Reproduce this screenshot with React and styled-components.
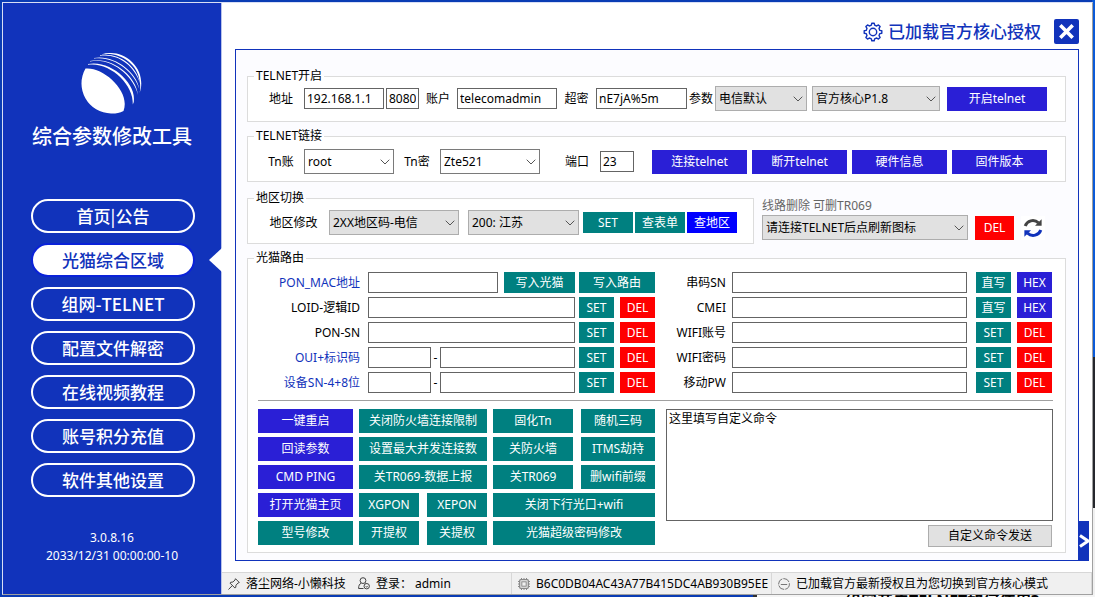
import { useState } from "react";
import styled, { createGlobalStyle, css } from "styled-components";

const COLORS = {
  brand: "#1133bb",
  teal: "#008080",
  violet: "#2a1fd6",
  blue: "#0000ff",
  red: "#ff0000",
};

const navItems = [
  "首页|公告",
  "光猫综合区域",
  "组网-TELNET",
  "配置文件解密",
  "在线视频教程",
  "账号积分充值",
  "软件其他设置",
];

const leftFields = [
  { id: "loid", label: "LOID-逻辑ID" },
  { id: "ponsn", label: "PON-SN" },
  { id: "oui", label: "OUI+标识码", split: true, link: true },
  { id: "devsn", label: "设备SN-4+8位", split: true, link: true },
];

const rightFields = [
  { id: "sn", label: "串码SN", hex: true },
  { id: "cmei", label: "CMEI", hex: true },
  { id: "wifiname", label: "WIFI账号" },
  { id: "wifipass", label: "WIFI密码" },
  { id: "mobilepw", label: "移动PW" },
];

const Logo = () => (
  <svg width="62" height="62" viewBox="0 0 62 62" fill="#fff" aria-hidden="true">
    <path d="M4.5 15.500C22 13.500 50 38 42.500 58C38.500 60 34 60.700 30 60.500A30 30 0 0 1 4.500 15.500Z" />
    <path d="M7 11.800C28 8.500 53 31 51.800 51.500L52.800 49C56 30 29 6.500 7 11Z" />
    <path d="M9 8.500C31 4 53 24 57 42C55.500 23 31 3 9 7.900Z" />
    <path d="M13 5.600C32 2.500 53 18 58.300 36C55.500 18 32 1.300 13 5Z" />
    <path d="M19 2.900C36 0 53 12 59 30C55 11 36 -1 19 2.300Z" />
    <path d="M21 1.600C36 -2 57 9 58.800 29C59.500 33 59.300 37 58.600 40C62 31 60.500 18 51 9C42 0 30 -1.500 21 1.200Z" />
  </svg>
);

const Chevron = () => (
  <svg width="10" height="6" viewBox="0 0 10 6" fill="none" stroke="#555" aria-hidden="true">
    <path d="M0.7 0.7L5 5L9.300 0.700" />
  </svg>
);

const GearIcon = () => (
  <svg width="20" height="20" viewBox="0 0 20 20" fill="none" stroke={COLORS.brand} strokeWidth="1.4" strokeLinejoin="round" aria-hidden="true">
    <path d="M8.400 3.200L8.800 1.200H11.200L11.600 3.200L13.700 4L15.400 2.900L17.100 4.600L16 6.300L16.800 8.400L18.800 8.800V11.200L16.800 11.600L16 13.700L17.100 15.400L15.400 17.100L13.700 16L11.600 16.800L11.200 18.800H8.800L8.400 16.800L6.300 16L4.600 17.100L2.900 15.400L4 13.700L3.200 11.600L1.200 11.200V8.800L3.200 8.400L4 6.300L2.900 4.600L4.600 2.900L6.300 4Z" />
    <circle cx="10" cy="10" r="3.700" />
  </svg>
);

const CrossIcon = () => (
  <svg width="15" height="15" viewBox="0 0 15 15" fill="none" stroke="#fff" strokeWidth="3.600" aria-hidden="true">
    <path d="M1.300 1.300L13.700 13.700M13.700 1.300L1.300 13.700" />
  </svg>
);

const RefreshIcon = () => (
  <svg width="20" height="20" viewBox="0 0 20 20" fill="none" strokeWidth="3" aria-hidden="true">
    <path d="M2.200 8C4 2.500 11 0.800 15.500 4.800" stroke="#444" />
    <path d="M18.600 1.200V7.800H12Z" fill="#444" />
    <path d="M17.800 12C16 17.500 9 19.200 4.500 15.200" stroke={COLORS.brand} />
    <path d="M1.400 18.800V12.200H8Z" fill={COLORS.brand} />
  </svg>
);

const PinIcon = () => (
  <svg width="12" height="12" viewBox="0 0 12 12" fill="none" stroke="#444" strokeLinejoin="round" aria-hidden="true">
    <path d="M7.500 0.700L11.300 4.500L10 5L8 7.200L7.700 9.500L6.900 10L2 5.100L2.600 4.300L4.900 4L7 2ZM4.300 7.600L0.500 11.500" />
  </svg>
);

const UserIcon = () => (
  <svg width="12" height="13" viewBox="0 0 12 13" fill="none" stroke="#444" aria-hidden="true">
    <circle cx="5" cy="3.600" r="2.900" />
    <path d="M3.200 6.200C1.400 7 0.600 8.600 0.600 11.500H5.500M7.500 6.200L8.500 6.600" />
    <circle cx="8.700" cy="9.200" r="2.700" />
    <path d="M7.700 9.300C8 10.300 9.400 10.300 9.700 9.300" />
  </svg>
);

const ChipIcon = () => (
  <svg width="12" height="12" viewBox="0 0 12 12" fill="none" stroke="#888" aria-hidden="true">
    <rect x="1.700" y="1.700" width="8.600" height="8.600" rx="1" strokeWidth="1.300" />
    <rect x="3.800" y="3.800" width="4.400" height="4.400" />
    <path d="M3.500 0V1.500M6 0V1.500M8.500 0V1.500M3.500 10.500V12M6 10.500V12M8.500 10.500V12M0 3.500H1.500M0 6H1.500M0 8.500H1.500M10.500 3.500H12M10.500 6H12M10.500 8.500H12" />
  </svg>
);

const MinusIcon = () => (
  <svg width="12" height="12" viewBox="0 0 12 12" fill="none" stroke="#777" aria-hidden="true">
    <circle cx="6" cy="6" r="5.400" strokeDasharray="7 1" />
    <path d="M2.800 6.500H9.200" />
  </svg>
);

const SelectBox = ({ id, label, options, width, editable }) => (
  <SelectWrap $width={width}>
    <StyledSelect id={id} aria-label={label} $editable={editable}>
      {options.map((option) => (
        <option key={option}>{option}</option>
      ))}
    </StyledSelect>
    <Chevron />
  </SelectWrap>
);

const Sidebar = ({ active, onSelect }) => (
  <SidebarBlock>
    <Logo />
    <AppTitle>综合参数修改工具</AppTitle>
    <Nav>
      {navItems.map((item, index) => (
        <NavItem key={item} $active={index === active}>
          <NavButton $active={index === active} onClick={() => onSelect(index)}>
            {item}
          </NavButton>
        </NavItem>
      ))}
    </Nav>
    <Version>
      3.0.8.16
      <br />
      2033/12/31 00:00:00-10
    </Version>
  </SidebarBlock>
);

const TelnetOpen = () => (
  <Group $top={2} $bottom={10}>
    <legend>TELNET开启</legend>
    <Row>
      <Label htmlFor="host" $width={46}>地址</Label>
      <TextInput id="host" $width={80} defaultValue="192.168.1.1" />
      <TextInput aria-label="地址端口" $width={33} $gap={2} defaultValue="8080" />
      <Label htmlFor="account" $width={38}>账户</Label>
      <TextInput id="account" $width={100} defaultValue="telecomadmin" />
      <Label htmlFor="superpass" $width={39}>超密</Label>
      <TextInput id="superpass" $width={91} defaultValue="nE7jA%5m" />
      <Label htmlFor="param" $width={28}>参数</Label>
      <SelectBox id="param" width={92} options={["电信默认"]} />
      <Actions $gap={7}>
        <SelectBox label="核心" width={128} options={["官方核心P1.8"]} />
        <Button $color="violet" $width={100}>开启telnet</Button>
      </Actions>
    </Row>
  </Group>
);

const TelnetConnect = () => (
  <Group $top={5} $bottom={7}>
    <legend>TELNET链接</legend>
    <Row>
      <Label htmlFor="tnuser" $width={46}>Tn账</Label>
      <SelectBox id="tnuser" width={90} editable options={["root"]} />
      <Label htmlFor="tnpass" $width={46}>Tn密</Label>
      <SelectBox id="tnpass" width={100} editable options={["Zte521"]} />
      <PortField>
        <Label htmlFor="port" $width={46}>端口</Label>
        <TextInput id="port" $width={34} defaultValue="23" />
      </PortField>
      <Actions $gap={5}>
        {["连接telnet", "断开telnet", "硬件信息", "固件版本"].map((text) => (
          <Button key={text} $color="violet" $width={95}>{text}</Button>
        ))}
      </Actions>
    </Row>
  </Group>
);

const RegionSwitch = () => (
  <RegionRow>
    <Group $top={4} $bottom={8}>
      <legend>地区切换</legend>
      <Row>
        <Label htmlFor="region" $width={71}>地区修改</Label>
        <SelectBox id="region" width={130} options={["2XX地区码-电信"]} />
        <Actions $gap={2}>
          <SelectBox label="省份" width={111} options={["200: 江苏"]} />
          <Button $color="teal" $width={50} $small $inset>SET</Button>
          <Button $color="teal" $width={50} $small>查表单</Button>
          <Button $color="blue" $width={50} $small>查地区</Button>
        </Actions>
      </Row>
    </Group>
    <LineDelete>
      <label htmlFor="line">线路删除 可删TR069</label>
      <div>
        <SelectBox id="line" options={["请连接TELNET后点刷新图标"]} />
        <Button $color="red" $width={39}>DEL</Button>
        <IconButton aria-label="刷新"><RefreshIcon /></IconButton>
      </div>
    </LineDelete>
  </RegionRow>
);

const RouterForm = () => (
  <>
    <FormColumn>
      <FormRow>
        <FormLabel htmlFor="mac" $width={102} $link>PON_MAC地址</FormLabel>
        <TextInput id="mac" />
        <Pair $gap={6}>
          <Button $color="teal" $width={71} $small>写入光猫</Button>
        </Pair>
        <Pair $gap={4}>
          <Button $color="teal" $width={76} $small>写入路由</Button>
        </Pair>
      </FormRow>
      {leftFields.map(({ id, label, split, link }) => (
        <FormRow key={id}>
          <FormLabel htmlFor={id} $width={102} $link={link}>{label}</FormLabel>
          {split && (
            <>
              <TextInput id={id} $width={63} />
              <Dash>-</Dash>
            </>
          )}
          <TextInput id={split ? undefined : id} aria-label={label} />
          <Pair $gap={4}>
            <Button $color="teal" $width={35} $small>SET</Button>
            <Button $color="red" $width={35} $small>DEL</Button>
          </Pair>
        </FormRow>
      ))}
    </FormColumn>
    <FormColumn $inset>
      {rightFields.map(({ id, label, hex }) => (
        <FormRow key={id}>
          <FormLabel htmlFor={id} $width={60}>{label}</FormLabel>
          <TextInput id={id} />
          <Pair $gap={9}>
            <Button $color="teal" $width={35} $small>{hex ? "直写" : "SET"}</Button>
            <Button $color={hex ? "violet" : "red"} $width={35} $small>{hex ? "HEX" : "DEL"}</Button>
          </Pair>
        </FormRow>
      ))}
    </FormColumn>
  </>
);

const RouterTools = () => (
  <>
    <ToolGroups>
      <ToolGrid>
        {["一键重启", "回读参数", "CMD PING", "打开光猫主页"].map((text) => (
          <Button key={text} $color="violet" $span>{text}</Button>
        ))}
        <Button $color="teal" $span>型号修改</Button>
      </ToolGrid>
      <ToolGrid $columns="1fr 1fr">
        <Button $color="teal" $span>关闭防火墙连接限制</Button>
        <Button $color="teal" $span>设置最大并发连接数</Button>
        <Button $color="teal" $span>关TR069-数据上报</Button>
        <Button $color="teal">XGPON</Button>
        <Button $color="teal">XEPON</Button>
        <Button $color="teal">开提权</Button>
        <Button $color="teal">关提权</Button>
      </ToolGrid>
      <ToolGrid $columns="80px 1fr">
        <Button $color="teal">固化Tn</Button>
        <Button $color="teal">随机三码</Button>
        <Button $color="teal">关防火墙</Button>
        <Button $color="teal">ITMS劫持</Button>
        <Button $color="teal">关TR069</Button>
        <Button $color="teal">删wifi前缀</Button>
        <Button $color="teal" $span>关闭下行光口+wifi</Button>
        <Button $color="teal" $span>光猫超级密码修改</Button>
      </ToolGrid>
    </ToolGroups>
    <CommandBox>
      <textarea aria-label="自定义命令" defaultValue="这里填写自定义命令" />
      <SendButton>自定义命令发送</SendButton>
    </CommandBox>
  </>
);

const StatusBar = () => (
  <StatusBlock>
    <StatusCell $width={290}>
      <PinIcon />
      <span>落尘网络-小懒科技</span>
      <LoginInfo>
        <UserIcon />
        <span>登录： admin</span>
      </LoginInfo>
    </StatusCell>
    <StatusCell $width={260}>
      <ChipIcon />
      <span>B6C0DB04AC43A77B415DC4AB930B95EE</span>
    </StatusCell>
    <StatusCell>
      <MinusIcon />
      <span>已加载官方最新授权且为您切换到官方核心模式</span>
    </StatusCell>
  </StatusBlock>
);

const App = () => {
  const [active, setActive] = useState(1);

  return (
    <Desktop>
      <GlobalStyle />
      <BehindPage>组网开启TELNET如何使用?</BehindPage>
      <Window>
        <Sidebar active={active} onSelect={setActive} />
        <Main>
          <Header>
            <GearIcon />
            <h2>已加载官方核心授权</h2>
            <CloseButton aria-label="关闭"><CrossIcon /></CloseButton>
          </Header>
          <Panel>
            <TelnetOpen />
            <TelnetConnect />
            <RegionSwitch />
            <Group $top={6} $bottom={7} $full>
              <legend>光猫路由</legend>
              <RouterGrid>
                <RouterForm />
                <Divider />
                <RouterTools />
              </RouterGrid>
            </Group>
            <ExpandTab aria-label="展开">
              <svg width="10" height="14" viewBox="0 0 10 14" fill="none" stroke="#fff" strokeWidth="3">
                <path d="M1 1.500L9 7L1 12.500" />
              </svg>
            </ExpandTab>
          </Panel>
          <StatusBar />
        </Main>
      </Window>
    </Desktop>
  );
};

export default App;

const GlobalStyle = createGlobalStyle`
  * {
    box-sizing: border-box;
  }
  body {
    margin: 0;
    color: #000;
    font-family: "Noto Sans", "Noto Sans CJK SC", sans-serif;
    font-size: 12px;
    line-height: 16px;
  }
  button, input, select, textarea {
    margin: 0;
    font: inherit;
    color: inherit;
    border-radius: 0;
  }
  button {
    cursor: pointer;
  }
  svg {
    display: block;
    flex: none;
  }
`;

const Desktop = styled.div`
  position: relative;
  min-height: 100vh;
  padding: 2px;
  overflow: hidden;
  background:
    linear-gradient(to right, #0a3cb4 753px, #303030 753px, #303030 757px, #f4f4f4 757px) bottom / 100% 3px no-repeat,
    linear-gradient(#0a5ad8 357px, #25272c 357px, #25272c 508px, #f0f0f0 508px) right / 3px 100% no-repeat,
    #0a3cb4;
`;

const BehindPage = styled.div`
  position: absolute;
  left: 845px;
  top: 592px;
  font-size: 16px;
  font-weight: 700;
  line-height: 18px;
  white-space: nowrap;
`;

const Window = styled.div`
  position: relative;
  display: flex;
  border: 1px solid #a0a0a0;
  border-top-color: #d8def5;
  border-left-color: #d8def5;
  background-color: white;
`;

const SidebarBlock = styled.aside`
  width: 219px;
  flex: none;
  display: flex;
  flex-direction: column;
  align-items: center;
  padding-top: 50px;
  border-right: 1px solid #b8c2ea;
  background-color: ${COLORS.brand};
  color: white;
`;

const AppTitle = styled.h1`
  margin: 8px 0 0;
  font-size: 20px;
  font-weight: 500;
  line-height: 28px;
`;

const Nav = styled.nav`
  width: 100%;
  margin-top: 48px;
  display: flex;
  flex-direction: column;
  gap: 10px;
`;

const NavItem = styled.div`
  position: relative;
  display: flex;
  justify-content: center;
  padding-left: 2px;
  ${({ $active }) => $active && css`
    &::after {
      content: "";
      position: absolute;
      right: -1px;
      top: 5px;
      border: 12px solid transparent;
      border-right: 13px solid white;
      border-left: 0;
    }
  `}
`;

const NavButton = styled.button`
  width: 164px;
  height: 34px;
  padding: 0;
  border: 2px solid ${({ $active }) => ($active ? "#0a22d8" : "white")};
  border-radius: 17px;
  background-color: ${({ $active }) => ($active ? "white" : "transparent")};
  color: ${({ $active }) => ($active ? COLORS.brand : "white")};
  font-family: "Noto Sans CJK SC", sans-serif;
  font-size: 17px;
  font-weight: 500;
  line-height: 28px;
`;

const Version = styled.p`
  margin: 32px 0 0;
  line-height: 18px;
  text-align: center;
`;

const Main = styled.main`
  flex: 1;
  min-width: 0;
  display: flex;
  flex-direction: column;
`;

const Header = styled.header`
  display: flex;
  justify-content: flex-end;
  align-items: center;
  gap: 5px;
  padding: 16px 13px 5px;
  h2 {
    margin: 0;
    color: ${COLORS.brand};
    font-size: 17px;
    font-weight: 500;
    line-height: 24px;
  }
`;

const CloseButton = styled.button`
  width: 25px;
  height: 25px;
  margin-left: 8px;
  padding: 5px;
  border: 0;
  border-radius: 2px;
  background-color: ${COLORS.brand};
`;

const Panel = styled.section`
  position: relative;
  display: flex;
  flex-direction: column;
  gap: 6px;
  margin: 0 13px 11px;
  padding: 18px 12px 7px 11px;
  border: 1px solid ${COLORS.brand};
  background-color: #fcfcff;
`;

const Group = styled.fieldset`
  min-width: 0;
  margin: 0;
  padding: ${({ $top, $bottom, $full }) => `${$top}px ${$full ? 12 : 18}px ${$bottom}px 6px`};
  border: 1px solid #dcdcdc;
  background-color: white;
  legend {
    padding: 0 2px;
  }
`;

const Row = styled.div`
  display: flex;
  align-items: center;
  height: 25px;
  padding-left: 4px;
`;

const Label = styled.label`
  flex: none;
  width: ${({ $width }) => $width}px;
  text-align: center;
  white-space: nowrap;
`;

const TextInput = styled.input`
  flex: ${({ $width }) => ($width ? "none" : "1")};
  width: ${({ $width }) => ($width ? `${$width}px` : "auto")};
  min-width: 0;
  height: 21px;
  margin-left: ${({ $gap }) => $gap || 0}px;
  padding: 0 2px;
  border: 1px solid #646464;
  background-color: white;
`;

const SelectWrap = styled.div`
  position: relative;
  flex: ${({ $width }) => ($width ? "none" : "1")};
  width: ${({ $width }) => ($width ? `${$width}px` : "auto")};
  svg {
    position: absolute;
    right: 4px;
    top: 10px;
    pointer-events: none;
  }
`;

const StyledSelect = styled.select`
  display: block;
  width: 100%;
  height: 25px;
  padding: 0 16px 0 3px;
  appearance: none;
  border: 1px solid ${({ $editable }) => ($editable ? "#7a7a7a" : "#adadad")};
  background-color: ${({ $editable }) => ($editable ? "white" : "#e1e1e1")};
`;

const Button = styled.button`
  flex: none;
  width: ${({ $width }) => ($width ? `${$width}px` : "auto")};
  height: ${({ $small }) => ($small ? 21 : 24)}px;
  padding: 0;
  border: 0;
  background-color: ${({ $color }) => COLORS[$color]};
  color: white;
  white-space: nowrap;
  ${({ $inset }) => $inset && css`
    margin-left: 2px;
  `}
  ${({ $span }) => $span && css`
    grid-column: 1 / -1;
  `}
`;

const Actions = styled.div`
  display: flex;
  align-items: center;
  gap: ${({ $gap }) => $gap}px;
  margin-left: auto;
`;

const PortField = styled.div`
  display: flex;
  align-items: center;
  margin-left: 14px;
`;

const RegionRow = styled.div`
  display: grid;
  grid-template-columns: 507px 1fr;
  gap: 8px;
  padding-top: 2px;
  fieldset {
    padding-right: 16px;
  }
`;

const LineDelete = styled.div`
  padding: 8px 21px 0 0;
  color: #666;
  label {
    display: block;
    margin-bottom: 1px;
  }
  > div {
    display: flex;
    align-items: center;
    gap: 7px;
    color: black;
  }
`;

const IconButton = styled.button`
  width: 24px;
  height: 24px;
  padding: 2px;
  border: 0;
  background-color: white;
`;

const RouterGrid = styled.div`
  display: grid;
  grid-template-columns: 397px 1fr;
  column-gap: 11px;
  padding-left: 4px;
`;

const FormColumn = styled.div`
  display: flex;
  flex-direction: column;
  gap: 4px;
  padding-right: ${({ $inset }) => ($inset ? 1 : 0)}px;
`;

const FormRow = styled.div`
  display: flex;
  align-items: center;
`;

const FormLabel = styled.label`
  flex: none;
  width: ${({ $width }) => $width}px;
  margin-right: ${({ $width }) => ($width > 100 ? 8 : 6)}px;
  color: ${({ $link }) => ($link ? COLORS.brand : "inherit")};
  text-align: right;
  white-space: nowrap;
`;

const Pair = styled.div`
  display: flex;
  gap: 6px;
  margin-left: ${({ $gap }) => $gap}px;
`;

const Dash = styled.span`
  width: 9px;
  text-align: center;
`;

const Divider = styled.hr`
  grid-column: 1 / -1;
  width: 100%;
  height: 1px;
  margin: 7px 0 8px;
  border: 0;
  background-color: #a0a0a0;
`;

const ToolGroups = styled.div`
  display: grid;
  grid-template-columns: 95px 128px 162px;
  gap: 6px;
`;

const ToolGrid = styled.div`
  display: grid;
  grid-template-columns: ${({ $columns }) => $columns || "1fr"};
  align-content: start;
  gap: 4px 8px;
`;

const CommandBox = styled.div`
  display: flex;
  flex-direction: column;
  align-items: flex-end;
  gap: 4px;
  textarea {
    flex: 1;
    width: 100%;
    padding: 1px 2px;
    resize: none;
    border: 1px solid #646464;
    background-color: white;
  }
`;

const SendButton = styled.button`
  width: 124px;
  height: 22px;
  margin: 0 1px -2px 0;
  padding: 0;
  border: 1px solid #adadad;
  background-color: #e1e1e1;
`;

const ExpandTab = styled.button`
  position: absolute;
  right: -11px;
  bottom: -1px;
  width: 11px;
  height: 40px;
  padding: 0 0 0 1px;
  border: 0;
  background-color: ${COLORS.brand};
`;

const StatusBlock = styled.footer`
  display: flex;
  height: 22px;
  border-top: 1px solid #d7d7d7;
  background-color: #f0f0f0;
`;

const StatusCell = styled.div`
  flex: ${({ $width }) => ($width ? "none" : "1")};
  width: ${({ $width }) => ($width ? `${$width}px` : "auto")};
  display: flex;
  align-items: center;
  gap: 6px;
  padding-left: 6px;
  overflow: hidden;
  border-right: 1px solid #d7d7d7;
  white-space: nowrap;
`;

const LoginInfo = styled.div`
  display: flex;
  align-items: center;
  gap: 6px;
  margin-left: 6px;
`;
